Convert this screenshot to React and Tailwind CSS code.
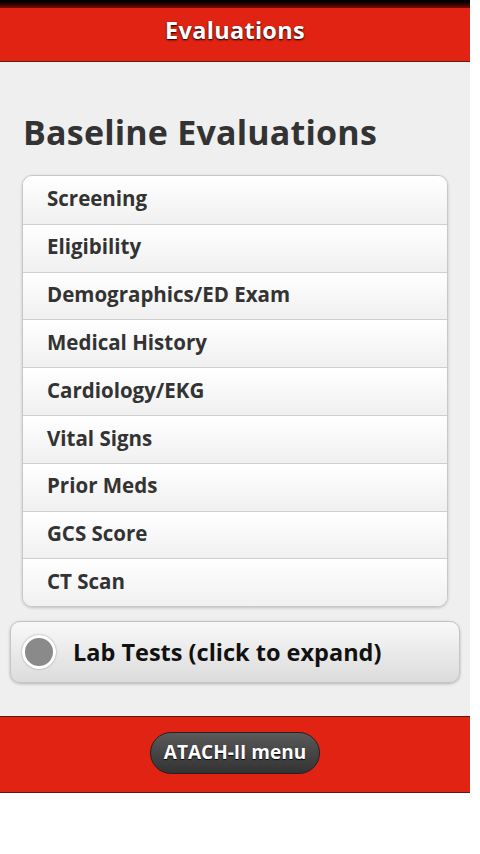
import { useState } from 'react';

const items = [
  'Screening',
  'Eligibility',
  'Demographics/ED Exam',
  'Medical History',
  'Cardiology/EKG',
  'Vital Signs',
  'Prior Meds',
  'GCS Score',
  'CT Scan',
];

function App() {
  const [open, setOpen] = useState(false);

  return (
    <div className="min-h-[854px] bg-white font-['Open_Sans',sans-serif]">
      <div className="w-[470px]">
        <div className="h-2 bg-gradient-to-b from-black to-[#7a0d05]" />
        <header className="h-[54px] bg-[#e02312] border-b border-[#6b1a10] flex justify-center pt-[5px]">
          <h1 className="text-white font-bold text-[23.5px] tracking-[0.3px] [text-shadow:0_1px_2px_#000]">Evaluations</h1>
        </header>

        <main className="bg-[#efefef] h-[654px] pt-[53px] px-[10px]">
          <h2 className="ml-[13px] text-[#333] font-bold text-[34px] leading-none tracking-[0.2px]">Baseline Evaluations</h2>

          <ul className="mt-[26px] mx-[12px] rounded-[10px] border border-[#c8c8c8] shadow-[0_1px_3px_rgba(0,0,0,0.2)] overflow-hidden">
            {items.map((item, i) => (
              <li
                key={item}
                className={
                  'h-[47.8px] flex items-center pl-[24px] pb-[3px] bg-gradient-to-b from-white to-[#f0f0f0] text-[#333] font-bold text-[20.5px] ' +
                  (i > 0 ? 'border-t border-[#cfcfcf]' : '')
                }
              >
                {item}
              </li>
            ))}
          </ul>

          <button
            onClick={() => setOpen(!open)}
            className="mt-[14px] w-full h-[62px] rounded-[10px] border border-[#c4c4c4] bg-gradient-to-b from-[#f8f8f8] to-[#dcdcdc] shadow-[0_1px_3px_rgba(0,0,0,0.25)] flex items-center pl-[11px]"
          >
            <span className="w-[34px] h-[34px] rounded-full bg-[#8a8a8a] border-[3px] border-white shadow-[0_0_2px_rgba(0,0,0,0.4)]" />
            <span className="ml-[17px] text-[#111] font-bold text-[23.5px]">Lab Tests (click to expand)</span>
          </button>
        </main>

        <footer className="h-[77px] bg-[#e02312] border-t border-b border-[#5a1a12] flex items-center justify-center pb-[4px]">
          <button className="h-[42px] px-[13px] rounded-full border border-[#222] bg-gradient-to-b from-[#5a5a5a] to-[#333] text-white font-bold text-[19px] [text-shadow:0_1px_1px_#000]">
            ATACH-II menu
          </button>
        </footer>
      </div>
    </div>
  );
}

export default App;
